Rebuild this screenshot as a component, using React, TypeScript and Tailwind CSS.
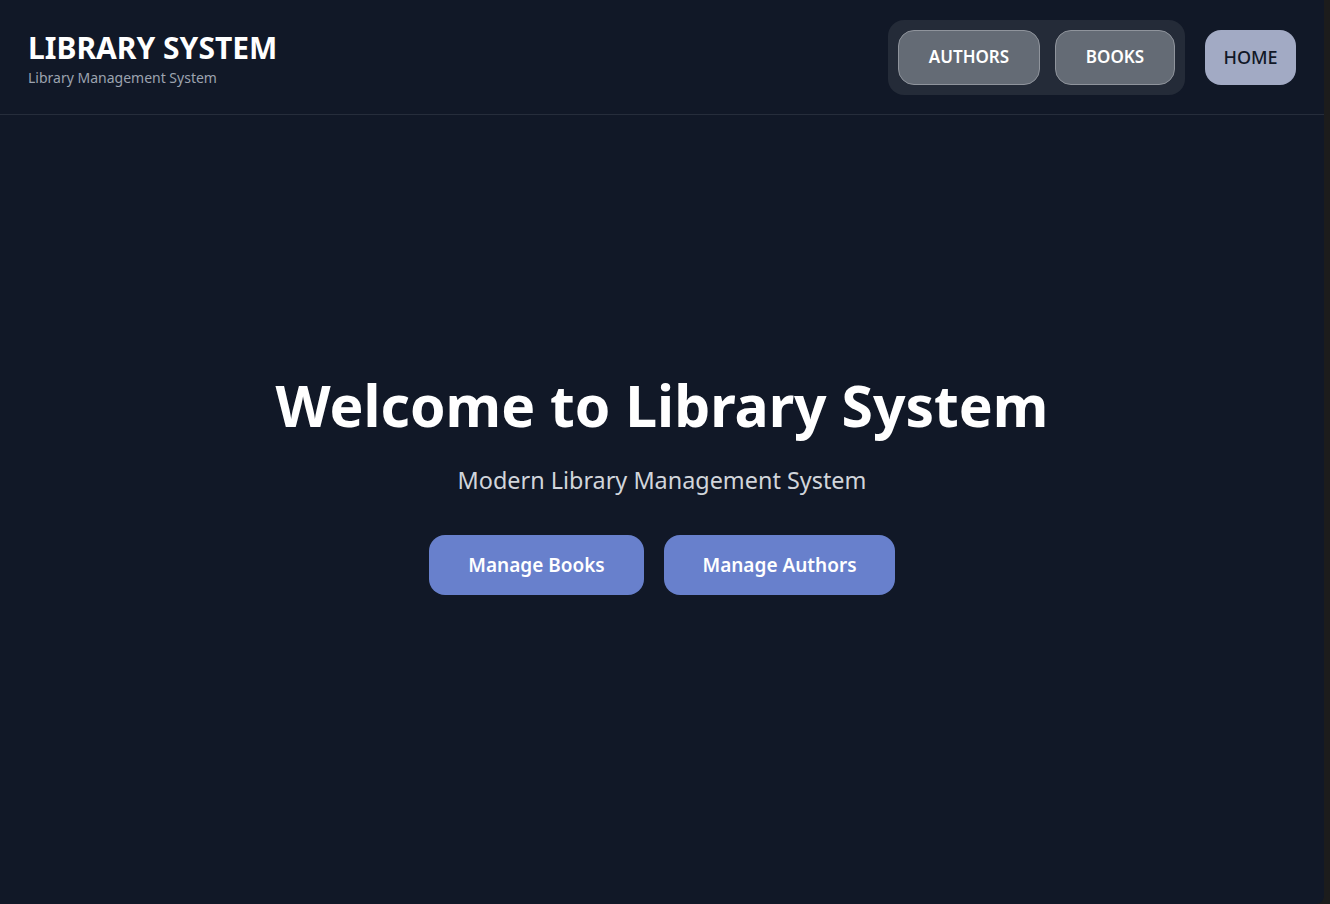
import React from "react";

export default function App() {
  return (
    <div className="h-[904px] w-[1330px] bg-[#1c1c1c] overflow-hidden" style={{ fontFamily: '"Noto Sans", "Open Sans", sans-serif' }}>
      <div className="h-[904px] w-[1324px] rounded-br-lg bg-[#111827] flex flex-col">
        <header className="h-[115px] border-b border-[#262d3b] flex items-center justify-between px-7">
          <div className="flex flex-col">
            <h1 className="text-[30px] leading-[34px] font-bold text-white mt-[4px]">LIBRARY SYSTEM</h1>
            <p className="mt-[4px] text-[14px] leading-[18px] text-[#9ca3af]">Library Management System</p>
          </div>
          <nav className="flex items-center gap-5">
            <div className="flex items-center gap-[15px] bg-[#242b38] rounded-2xl p-[10px]">
              <button className="h-[55px] w-[142px] rounded-2xl bg-[#646b75] border border-[#8f949c] text-white text-[17px] font-semibold">AUTHORS</button>
              <button className="h-[55px] w-[120px] rounded-2xl bg-[#646b75] border border-[#8f949c] text-white text-[17px] font-semibold">BOOKS</button>
            </div>
            <button className="h-[55px] w-[91px] rounded-2xl bg-[#a2aac4] text-[#111827] text-[18px] font-medium">HOME</button>
          </nav>
        </header>
        <main className="flex-1 flex flex-col items-center pt-[257px]">
          <h2 className="text-[57px] leading-[66px] font-bold text-white">Welcome to Library System</h2>
          <p className="mt-[26px] text-[23.4px] leading-[32px] text-[#d1d5db]">Modern Library Management System</p>
          <div className="mt-[39px] flex gap-5">
            <button className="h-[60px] w-[215px] rounded-2xl bg-[#6880cc] text-white text-[19px] font-semibold">Manage Books</button>
            <button className="h-[60px] w-[231px] rounded-2xl bg-[#6880cc] text-white text-[19px] font-semibold">Manage Authors</button>
          </div>
        </main>
      </div>
    </div>
  );
}
